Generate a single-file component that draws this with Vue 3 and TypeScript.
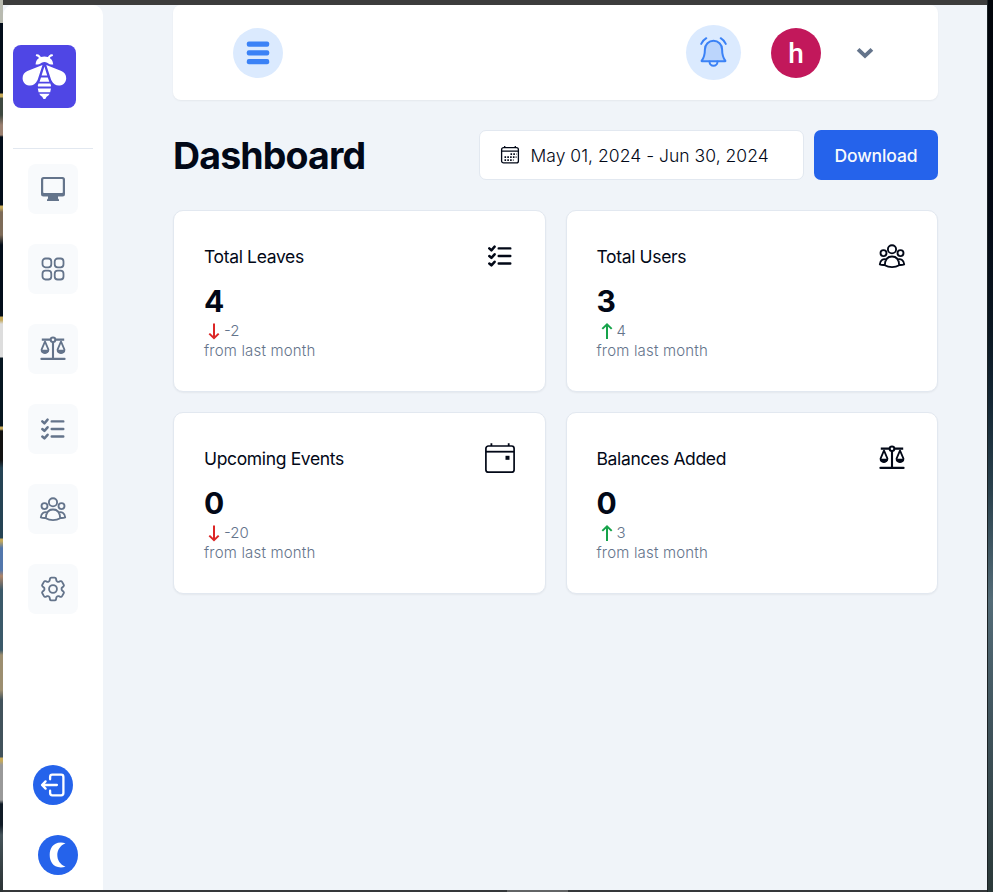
<script setup lang="ts">
import { h, type FunctionalComponent } from 'vue'

interface Stat {
  title: string
  icon: string
  value: number
  change: number
}

const nav: string[] = ['monitor', 'grid', 'scales', 'checklist', 'users', 'gear']

const stats: Stat[] = [
  { title: 'Total Leaves', icon: 'checklist', value: 4, change: -2 },
  { title: 'Total Users', icon: 'users', value: 3, change: 4 },
  { title: 'Upcoming Events', icon: 'calendar', value: 0, change: -20 },
  { title: 'Balances Added', icon: 'scales', value: 0, change: 3 },
]

const gearPath =
  'M9.594 3.94c.09-.542.56-.94 1.11-.94h2.593c.55 0 1.02.398 1.11.94l.213 1.281c.063.374.313.686.645.87.074.04.147.083.22.127.325.196.72.257 1.075.124l1.217-.456a1.125 1.125 0 0 1 1.37.49l1.296 2.247a1.125 1.125 0 0 1-.26 1.431l-1.003.827c-.293.241-.438.613-.43.992a7.723 7.723 0 0 1 0 .255c-.008.378.137.75.43.991l1.004.827c.424.35.534.955.26 1.43l-1.298 2.247a1.125 1.125 0 0 1-1.369.491l-1.217-.456c-.355-.133-.75-.072-1.076.124a6.47 6.47 0 0 1-.22.128c-.331.183-.581.495-.644.869l-.213 1.281c-.09.543-.56.94-1.11.94h-2.594c-.55 0-1.019-.398-1.11-.94l-.213-1.281c-.062-.374-.312-.686-.644-.87a6.52 6.52 0 0 1-.22-.127c-.325-.196-.72-.257-1.076-.124l-1.217.456a1.125 1.125 0 0 1-1.369-.49l-1.297-2.247a1.125 1.125 0 0 1 .26-1.431l1.004-.827c.292-.24.437-.613.43-.991a6.932 6.932 0 0 1 0-.255c.007-.38-.138-.751-.43-.992l-1.004-.827a1.125 1.125 0 0 1-.26-1.43l1.297-2.247a1.125 1.125 0 0 1 1.37-.491l1.216.456c.356.133.751.072 1.076-.124.072-.044.146-.086.22-.128.332-.183.582-.495.644-.869l.214-1.28Z'

const solid = { fill: 'currentColor', stroke: 'none' }

const Icon: FunctionalComponent<{ name: string }> = (props) => {
  const shapes = {
    monitor: () => [
      h('path', { ...solid, 'fill-rule': 'evenodd', d: 'M5.5 3h19A2.5 2.5 0 0 1 27 5.500v14.500a2.500 2.500 0 0 1-2.500 2.500H20v1.500q0 1 1 1.500V27H9v-1.500q1-.5 1-1.500v-1.500H5.500A2.500 2.500 0 0 1 3 20V5.500A2.500 2.500 0 0 1 5.500 3ZM6 5q-.8 0-.8.8v12.400q0 .8.8.8h18q.8 0 .8-.8V5.800q0-.8-.8-.8Z' }),
    ],
    grid: () => [
      [4.5, 4.5], [16.7, 4.5], [4.5, 16.7], [16.7, 16.7],
    ].map(([x, y]) => h('rect', { x, y, width: 8.8, height: 8.8, rx: 3, 'stroke-width': 1.8 })),
    scales: () => [
      h('circle', { cx: 15, cy: 5.8, r: 2.3, 'stroke-width': 2 }),
      h('path', { 'stroke-width': 2.1, d: 'M3.800 5.600H12.700M17.300 5.600H26.200M15 8v16' }),
      h('path', { 'stroke-width': 2.3, 'stroke-linecap': 'round', d: 'M3.500 24.900h23' }),
      h('path', { 'stroke-width': 1.9, 'stroke-linejoin': 'round', d: 'M7 7.500 3.600 15.500c0 4.600 6.800 4.600 6.800 0L7 7.500ZM23 7.500l-3.400 8c0 4.600 6.800 4.600 6.800 0L23 7.500Z' }),
      h('path', { ...solid, d: 'M3 15.800h8c0 5-8 5-8 0ZM19 15.800h8c0 5-8 5-8 0Z' }),
    ],
    checklist: () => [
      h('path', { 'stroke-width': 2.4, 'stroke-linecap': 'round', d: 'M13.700 7.400h11.600M13.700 15h11.600M13.700 22.500h11.600' }),
      h('path', { 'stroke-width': 2.5, 'stroke-linecap': 'round', 'stroke-linejoin': 'round', d: 'm4.300 7.400 2.100 1.900 3.200-3.600M4.300 15l2.100 1.900 3.200-3.600M4.300 22.500l2.100 1.900 3.200-3.600' }),
    ],
    users: () => [
      h('g', { 'stroke-width': 1.85 }, [
        h('circle', { cx: 15, cy: 8.3, r: 4.1 }),
        h('circle', { cx: 6.5, cy: 12.1, r: 3 }),
        h('circle', { cx: 23.5, cy: 12.1, r: 3 }),
        h('path', { 'stroke-linejoin': 'round', d: 'M7.800 24.200C8 18.500 10.600 15.500 15 15.500s7 3 7.200 8.700C18 26.700 12 26.700 7.800 24.200ZM9.600 18.400C6 17.500 3.100 19 2.800 23.300c1.500.7 3.200.8 5 .6M20.400 18.400c3.600-.9 6.500.6 6.800 4.900-1.500.7-3.200.8-5 .6' }),
      ]),
    ],
    gear: () => [
      h('g', { transform: 'translate(15 15) scale(1.27) translate(-12 -12)', 'stroke-width': 1.45, 'stroke-linejoin': 'round' }, [
        h('path', { d: gearPath }),
        h('circle', { cx: 12, cy: 12, r: 3.1 }),
      ]),
    ],
    calendar: () => [
      h('rect', { x: 0.9, y: 3, width: 28.2, height: 26.2, rx: 2.5, 'stroke-width': 1.7 }),
      h('path', { 'stroke-width': 1.8, d: 'M1 8.700h28' }),
      h('path', { 'stroke-width': 1.8, d: 'M6.400.3V3M23.700.3V3' }),
      h('rect', { ...solid, x: 20.5, y: 12.8, width: 4, height: 4 }),
    ],
  } as Record<string, () => ReturnType<typeof h>[]>
  return h(
    'svg',
    { width: 30, height: 30, viewBox: '0 0 30 30', fill: 'none', stroke: 'currentColor', 'stroke-width': 1.6, 'aria-hidden': 'true' },
    shapes[props.name](),
  )
}
Icon.props = ['name']
</script>

<template>
  <div class="desktop">
    <div class="edge-left"></div>
    <div class="window">
      <div class="titlebar"></div>
      <div class="app">
        <aside class="sidebar">
          <div class="logo">
            <svg width="63" height="63" viewBox="0 0 63 63" fill="#fff">
              <path d="M23.800 10.200q2.800.2 3.300 3.200M39 10.200q-2.800.2-3.300 3.200" fill="none" stroke="#fff" stroke-width="2" stroke-linecap="round" />
              <path d="M22.600 19.600C22.600 14.500 26.400 11.400 31.400 11.400s8.800 3.100 8.800 8.200c-2.800 0-4.600-.7-6-1.900q-2.800-1.500-5.600 0c-1.400 1.200-3.200 1.900-6 1.900Z" />
              <path d="M29.500 20 24.600 35C22.500 39.300 19.400 40.800 16 40.400 12 40 9.600 36.800 9.600 33.200c0-3.300 1.800-5.800 4.800-7.100ZM33.300 20l4.900 15c2.100 4.300 5.200 5.800 8.600 5.400 4-.4 6.400-3.600 6.400-7.200 0-3.300-1.800-5.800-4.800-7.100Z" />
              <path d="M31.400 21.500 34.200 30.400h-5.600ZM28 32.500h6.800l1.500 4.300h-9.800ZM25.500 38.600h11.800l.7 1.800-.2 1.200H25l-.2-1.200ZM24.800 43.500H38l-.8 3.700H25.600ZM26.200 48.700h10.400q-1 2.100-3 3.100l-1.300 2.300h-1.800l-1.300-2.300q-2-1-3-3.100Z" />
            </svg>
          </div>
          <nav class="nav">
            <button v-for="name in nav" :key="name" class="nav-item" :aria-label="name">
              <Icon :name="name" />
            </button>
          </nav>
          <div class="actions">
            <button class="round" aria-label="Log out">
              <svg width="30" height="30" viewBox="0 0 30 30" fill="none" stroke="#fff" stroke-width="2.300" stroke-linecap="round" stroke-linejoin="round">
                <path d="M12.100 9.300V6.900a2.200 2.200 0 0 1 2.200-2.200h8.900a2.200 2.200 0 0 1 2.200 2.200v16.200a2.200 2.200 0 0 1-2.200 2.200h-8.900a2.200 2.200 0 0 1-2.200-2.200v-2.400M18.900 15H4.200M7.600 11.400 4 15l3.600 3.600" />
              </svg>
            </button>
            <button class="round shifted" aria-label="Dark mode">
              <svg width="30" height="30" viewBox="0 0 30 30" fill="#fff">
                <path d="M22.500 3.200C10.500.3 6.700 8.500 6.700 15s3.800 14.700 15.800 11.800C17 24.500 14.300 20 14.300 15S17 5.500 22.500 3.200Z" />
              </svg>
            </button>
          </div>
        </aside>

        <main class="main">
          <header class="topbar">
            <button class="menu" aria-label="Menu">
              <svg width="24" height="26" viewBox="0 0 24 26" fill="#3b82f6">
                <rect x="0.800" y="1.500" width="22.400" height="5.200" rx="2" />
                <rect x="0.800" y="10.300" width="22.400" height="5.200" rx="2" />
                <rect x="0.800" y="19.100" width="22.400" height="5.200" rx="2" />
              </svg>
            </button>
            <div class="account">
              <button class="bell" aria-label="Notifications">
                <svg width="35" height="35" viewBox="0 0 35 35" fill="none" stroke="#3b82f6" stroke-width="2" stroke-linecap="round" stroke-linejoin="round">
                  <path d="M5.600 25.900C8.300 22.200 8.900 19.200 8.900 14.400a8.600 8.600 0 0 1 17.200 0c0 4.800.6 7.800 3.300 11.500q0 .3-.5.300H6.100q-.5 0-.5-.3Z" fill="#3b82f633" />
                  <path d="M13.500 26.500a4 4.300 0 0 0 8 0M5.200 8.900Q7 5.200 10.300 3.200M29.800 8.900Q28 5.200 24.700 3.200" />
                </svg>
              </button>
              <div class="avatar">h</div>
              <svg class="chevron" width="18" height="12" viewBox="0 0 18 12" fill="none" stroke="#64748b" stroke-width="3.900">
                <path d="M2.100 2.300 9 8.900l6.900-6.600" />
              </svg>
            </div>
          </header>

          <section class="heading">
            <h1>Dashboard</h1>
            <button class="date">
              <svg width="20" height="20" viewBox="0 0 20 20" fill="none" stroke="#020817" stroke-width="1.300">
                <rect x="1.600" y="2.700" width="16.800" height="15.200" rx="2" />
                <path d="M1.600 6.200h16.800M4.700 1v1.700M15.300 1v1.700" />
                <path d="M10.500 9.100h6M4.500 12.100h12M4.500 15.100h9" stroke-width="1.700" stroke-dasharray="1.600 1.200" />
              </svg>
              <span>May 01, 2024 - Jun 30, 2024</span>
            </button>
            <button class="download">Download</button>
          </section>

          <section class="cards">
            <article v-for="s in stats" :key="s.title" class="card">
              <div class="card-head">
                <h3>{{ s.title }}</h3>
                <Icon :name="s.icon" />
              </div>
              <div class="value">{{ s.value }}</div>
              <div class="change">
                <svg width="20" height="20" viewBox="0 0 20 20" fill="none" stroke-width="2" :class="s.change < 0 ? 'down' : 'up'">
                  <path v-if="s.change < 0" d="M10 2.500V17M5.300 12.600l4.700 4.600 4.700-4.600" />
                  <path v-else d="M10 18V3.500M5.300 7.900 10 3.300l4.700 4.600" />
                </svg>
                <span>{{ s.change }}</span>
              </div>
              <p class="note">from last month</p>
            </article>
          </section>
        </main>
      </div>
      <div class="scrollbar"><div class="thumb"></div></div>
    </div>
    <div class="edge-right"></div>
  </div>
</template>

<style>
body {
  margin: 0;
  overflow: hidden;
}
</style>

<style scoped>
.desktop {
  display: grid;
  grid-template-columns: 3px 1fr 6px;
  height: 892px;
  font-family: Inter, sans-serif;
  color: #020817;
}
.desktop * {
  box-sizing: border-box;
}
button {
  border: 0;
  padding: 0;
  font-family: inherit;
  color: inherit;
}
svg {
  display: block;
  flex: none;
}
h1,
h3,
p {
  margin: 0;
}
.edge-left {
  background: linear-gradient(#b8bab0 0 23px, #020d1a 23px 93px, #c5a95a 94px 97px, #3d4840 98px 115px, #9a8070 125px 135px, #020d1a 137px 205px, #c5a95a 206px 208px, #7d6b58 212px 235px, #020d1a 245px 316px, #c5a95a 317px 320px, #ddd 324px 357px, #061520 358px 426px, #c5a95a 427px 429px, #111 431px 460px, #254354 468px 538px, #c5a95a 539px 541px, #5277ac 548px 570px, #ae8569 576px, #3b5969 590px 650px, #9c8e70 655px 690px, #41525b 700px 757px, #c5a95a 758px 761px, #999 765px 800px, #101b26 804px 825px, #46545a 835px, #2b3234);
}
.edge-right {
  background: linear-gradient(#02050a, #030914 210px, #0b1722 330px, #142634 400px, #2a414d 490px, #536b77 600px, #40545d 720px, #2a3838);
  border-left: 1px solid #1b2225;
}
.window {
  display: flex;
  flex-direction: column;
  background: #f0f4f9;
}
.titlebar {
  height: 5px;
  background: #3c3c3c;
}
.app {
  flex: 1;
  display: flex;
}
.scrollbar {
  height: 2px;
  padding-left: 504px;
  background: #35383a;
}
.thumb {
  width: 61px;
  height: 2px;
  background: #626465;
}
.sidebar {
  width: 100px;
  background: #fff;
  border-radius: 10px 10px 0 0;
  display: flex;
  flex-direction: column;
  padding: 40px 10px 15px;
}
.logo {
  height: 104px;
  border-bottom: 1px solid #e2e8f0;
}
.logo svg {
  background: #4f46e5;
  border-radius: 8px;
}
.nav {
  display: flex;
  flex-direction: column;
  align-items: center;
  gap: 30px;
  padding-top: 15px;
}
.nav-item {
  width: 50px;
  height: 50px;
  display: grid;
  place-items: center;
  border-radius: 8px;
  background: #f8fafc;
  color: #64748b;
}
.actions {
  margin-top: auto;
  display: flex;
  flex-direction: column;
  gap: 30px;
  padding-left: 20px;
}
.round {
  width: 40px;
  height: 40px;
  border-radius: 50%;
  background: #2563eb;
  display: grid;
  place-items: center;
}
.shifted {
  margin-left: 5px;
}
.main {
  flex: 1;
  padding: 0 49px 0 70px;
}
.topbar {
  height: 95px;
  display: flex;
  align-items: center;
  justify-content: space-between;
  padding: 0 64px 0 60px;
  background: #fff;
  border-radius: 8px;
  box-shadow: 0 1px 2px rgb(0 0 0 / 5%);
}
.menu,
.bell,
.avatar {
  display: grid;
  place-items: center;
  border-radius: 50%;
}
.menu {
  width: 50px;
  height: 50px;
  background: #dbeafe;
}
.account {
  display: flex;
  align-items: center;
}
.bell {
  width: 55px;
  height: 55px;
  margin-right: 30px;
  background: #dbeafe;
}
.avatar {
  width: 50px;
  height: 50px;
  margin-right: 35px;
  padding-top: 1px;
  background: #c2185b;
  color: #fff;
  font: 500 28px/50px Roboto, sans-serif;
}
.heading {
  display: flex;
  align-items: center;
  gap: 10px;
  margin: 30px 0;
}
h1 {
  margin-right: auto;
  font-size: 37.5px;
  line-height: 45px;
  font-weight: 700;
  letter-spacing: -0.023em;
}
.date {
  width: 325px;
  height: 50px;
  display: flex;
  align-items: center;
  gap: 10.5px;
  padding: 0 20px;
  background: #fff;
  border: 1px solid #e2e8f0;
  border-radius: 7px;
  font-size: 17.5px;
  font-weight: 300;
}
.date span {
  letter-spacing: 0.03px;
}
.download {
  width: 124px;
  height: 50px;
  border-radius: 7px;
  background: #2563eb;
  color: #f8fafc;
  font-size: 17.5px;
  font-weight: 500;
  letter-spacing: -0.1px;
}
.cards {
  display: grid;
  grid-template-columns: 1fr 1fr;
  gap: 20px;
}
.card {
  height: 182px;
  padding: 30px;
  background: #fff;
  border: 1px solid #e2e8f0;
  border-radius: 10px;
  box-shadow: 0 1px 2px rgb(0 0 0 / 5%);
}
.card-head {
  display: flex;
  align-items: center;
  justify-content: space-between;
  height: 30px;
  margin-bottom: 10px;
}
h3 {
  padding-top: 2px;
  font-size: 17.5px;
  line-height: 17.5px;
  font-weight: 400;
  letter-spacing: -0.02em;
}
.value {
  font-size: 30px;
  line-height: 40px;
  font-weight: 700;
}
.change,
.note {
  font-size: 15px;
  line-height: 20px;
  font-weight: 300;
  color: #64748b;
}
.change {
  display: flex;
}
.note {
  letter-spacing: 0.012em;
}
.down {
  stroke: #dc2626;
}
.up {
  stroke: #16a34a;
}
</style>
